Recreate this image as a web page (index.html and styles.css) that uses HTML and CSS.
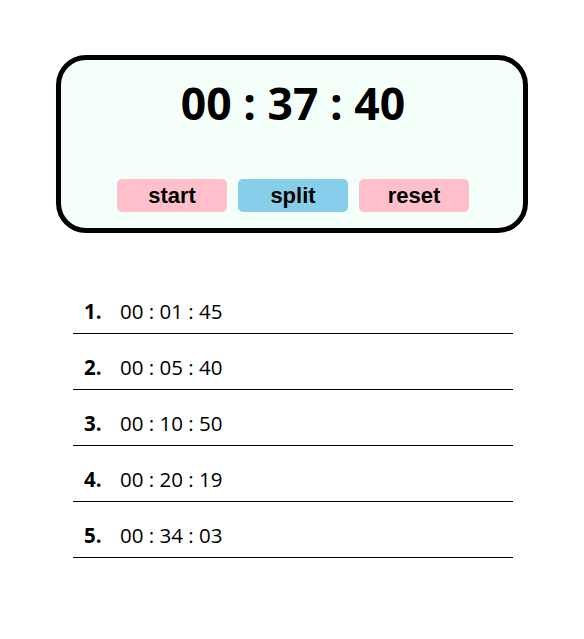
FILE: index.html
```html
<!DOCTYPE html>
<html lang="en">
<head>
<meta charset="utf-8">
<title>Stopwatch</title>
<link rel="stylesheet" href="styles.css">
</head>
<body>
<main class="page">
  <section class="card">
    <div class="time">00 : 37 : 40</div>
    <div class="controls">
      <button class="btn btn-pink">start</button>
      <button class="btn btn-blue">split</button>
      <button class="btn btn-pink">reset</button>
    </div>
  </section>
  <ol class="splits">
    <li class="split"><span class="num">1.</span><span class="val">00 : 01 : 45</span></li>
    <li class="split"><span class="num">2.</span><span class="val">00 : 05 : 40</span></li>
    <li class="split"><span class="num">3.</span><span class="val">00 : 10 : 50</span></li>
    <li class="split"><span class="num">4.</span><span class="val">00 : 20 : 19</span></li>
    <li class="split"><span class="num">5.</span><span class="val">00 : 34 : 03</span></li>
  </ol>
</main>
</body>
</html>
```
FILE: styles.css
```css
* { box-sizing: border-box; }
html, body { margin: 0; padding: 0; background: #fff; }
body { font-family: "Open Sans", "Noto Sans", sans-serif; color: #000; }
.page { display: flex; flex-direction: column; align-items: center; padding-top: 55px; }
.card {
  width: 472px;
  height: 178px;
  border: 5px solid #000;
  border-radius: 30px;
  background: #f5fffa;
  display: flex;
  flex-direction: column;
  align-items: center;
  padding-top: 18px;
}
.time {
  font-size: 44.5px;
  font-weight: 700;
  line-height: 50px;
  margin-left: 2px;
}
.controls { display: flex; gap: 11px; margin: 51px 0 0 2px; }
.btn {
  width: 110px;
  height: 33px;
  border: none;
  border-radius: 5px;
  font-family: "Liberation Sans", Arial, sans-serif;
  font-weight: 700;
  font-size: 22px;
  line-height: 33px;
  color: #000;
  padding: 0;
}
.btn-pink { background: #ffc0cb; }
.btn-blue { background: #87ceeb; }
.splits { list-style: none; margin: 45px 0 0 2px; padding: 0; width: 440px; }
.split {
  display: flex;
  height: 56px;
  border-bottom: 1px solid #000;
  padding: 21px 0 0 11px;
  font-size: 20.5px;
  line-height: 24px;
}
.num { width: 36px; font-weight: 700; }
```
